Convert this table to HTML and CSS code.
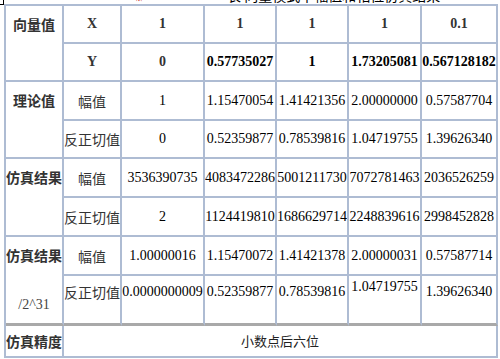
FILE: index.html
```html
<!DOCTYPE html>
<html lang="zh">
<head>
<meta charset="utf-8">
<title>仿真结果</title>
<link rel="stylesheet" href="styles.css">
</head>
<body>
<div class="top">
  <span class="corner"></span>
  <div class="capclip">
    <div class="captext"><span class="red">※</span><span class="cap">表 向量模式下幅值和相位仿真结果</span></div>
  </div>
</div>
<table class="grid">
  <colgroup>
    <col class="c58"><col class="c58"><col class="c83"><col class="c72"><col class="c72"><col class="c73"><col class="c76">
  </colgroup>
  <tr class="r38 b">
    <td class="h" rowspan="2">向量值</td>
    <td class="g">X</td><td class="g">1</td><td class="g">1</td><td class="g">1</td><td class="g">1</td><td class="g">0.1</td>
  </tr>
  <tr class="r38 b">
    <td class="g">Y</td><td class="g">0</td><td>0.57735027</td><td>1</td><td>1.73205081</td><td>0.567128182</td>
  </tr>
  <tr class="r39">
    <td class="h" rowspan="2">理论值</td>
    <td class="zh">幅值</td><td>1</td><td>1.15470054</td><td>1.41421356</td><td>2.00000000</td><td>0.57587704</td>
  </tr>
  <tr class="r38">
    <td class="zh">反正切值</td><td>0</td><td>0.52359877</td><td>0.78539816</td><td>1.04719755</td><td>1.39626340</td>
  </tr>
  <tr class="r39">
    <td class="h" rowspan="2">仿真结果</td>
    <td class="zh">幅值</td><td>3536390735</td><td>4083472286</td><td>5001211730</td><td>7072781463</td><td>2036526259</td>
  </tr>
  <tr class="r39">
    <td class="zh">反正切值</td><td>2</td><td>1124419810</td><td>1686629714</td><td>2248839616</td><td>2998452828</td>
  </tr>
  <tr class="r39">
    <td class="h gray" rowspan="2">仿真结果<div class="sub">/2^31</div></td>
    <td class="zh">幅值</td><td>1.00000016</td><td>1.15470072</td><td>1.41421378</td><td>2.00000031</td><td>0.57587714</td>
  </tr>
  <tr class="r50 t">
    <td class="zh gray">反正切值</td><td class="gray">0.0000000009</td><td class="gray">0.52359877</td><td class="gray">0.78539816</td><td class="gray hi">1.04719755</td><td class="gray">1.39626340</td>
  </tr>
  <tr class="r32">
    <td class="h2">仿真精度</td>
    <td class="prec" colspan="6">小数点后六位</td>
  </tr>
</table>
</body>
</html>
```

FILE: styles.css
```css
html, body {
  margin: 0;
  padding: 0;
  background: #ffffff;
}

body {
  font-family: "Liberation Serif", "Noto Sans CJK SC", serif;
  font-size: 14px;
  color: #000000;
}

.top {
  display: flex;
  height: 4px;
}

.corner {
  flex: none;
  width: 4px;
  height: 5px;
  box-sizing: border-box;
  border-right: 1px solid #000;
  border-bottom: 1px solid #000;
}

.capclip {
  flex: 1;
  height: 4px;
  overflow: hidden;
}

.captext {
  margin-top: -15px;
  line-height: 20px;
  white-space: nowrap;
  font-family: "Noto Sans CJK SC", sans-serif;
  font-size: 14px;
}

.red {
  color: #c00000;
  margin-left: 131px;
  font-size: 8px;
}

.cap {
  margin-left: 84px;
}

.grid {
  margin-left: 4px;
  border-collapse: separate;
  border-spacing: 0;
  table-layout: fixed;
  width: 494px;
  border-top: 2px solid #aebcd3;
  border-left: 2px solid #aebcd3;
}

.c58 { width: 58px; }
.c83 { width: 83px; }
.c72 { width: 72px; }
.c73 { width: 73px; }
.c76 { width: 76px; }

.r38 { height: 38px; }
.r39 { height: 39px; }
.r50 { height: 50px; }
.r32 { height: 32px; }

.grid td {
  box-sizing: border-box;
  border-right: 2px solid #aebcd3;
  border-bottom: 2px solid #aebcd3;
  padding: 0;
  text-align: center;
  vertical-align: middle;
  line-height: 20px;
  white-space: nowrap;
  overflow: hidden;
}

.b td {
  font-weight: bold;
}

.b td.g {
  color: #333333;
}

.grid td.h {
  font-family: "Noto Sans CJK SC", sans-serif;
  font-weight: bold;
  color: #333333;
  vertical-align: top;
  padding-top: 8px;
}

.grid td.h2 {
  font-family: "Noto Sans CJK SC", sans-serif;
  font-weight: bold;
  color: #333333;
}

.zh {
  font-family: "Noto Sans CJK SC", sans-serif;
  color: #333333;
}

.sub {
  margin-top: 30px;
  font-family: "Liberation Serif", serif;
  font-weight: normal;
  color: #444444;
}

.t td {
  vertical-align: top;
  padding-top: 6px;
}

.grid .t td.hi {
  padding-top: 1px;
}

.grid td.gray {
  border-bottom: 3px solid #a9a9a9;
}

.prec {
  font-family: "Noto Sans CJK SC", sans-serif;
  font-size: 13px;
  color: #222222;
}
```
